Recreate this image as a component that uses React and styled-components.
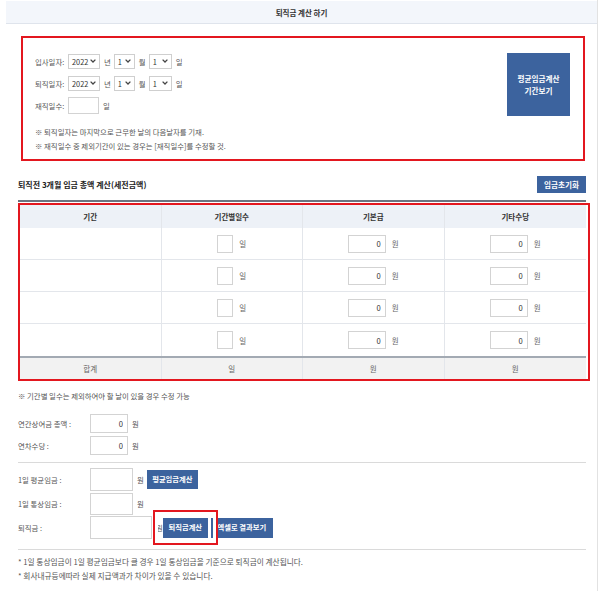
import React from 'react'
import styled, { createGlobalStyle } from 'styled-components'

const GlobalStyle = createGlobalStyle`
  body {
    margin: 0;
    background: #fff;
    font-family: "Noto Sans CJK KR", "Noto Sans", sans-serif;
    color: #444;
  }
  * { box-sizing: border-box; }
`

const Page = styled.div`
  width: 598px;
  min-height: 591px;
  padding-top: 1px;
  border-right: 1px solid #e2e2e2;
`

const Header = styled.div`
  margin-left: 6px;
  height: 23px;
  display: flex;
  align-items: center;
  justify-content: center;
  background: #f3f6fb;
  border-bottom: 1px solid #dfe4ec;
  font-size: 7.5px;
  font-weight: 700;
  color: #333;
`

const Body = styled.div`
  padding: 0 11px 0 18px;
`

const InfoFrame = styled.div`
  margin: 12px 0 0 3px;
  width: 564px;
  height: 125px;
  border: 2px solid #e3171f;
  display: flex;
  justify-content: space-between;
  align-items: flex-start;
  padding: 12px 13px 0 12px;
`

const FormCol = styled.div`
  display: flex;
  flex-direction: column;
`

const DateRow = styled.div`
  display: flex;
  align-items: center;
  height: 22px;
  font-size: 7.4px;
  color: #555;
`

const Label = styled.span`
  width: ${p => p.$w || 33}px;
  flex-shrink: 0;
`

const SelectBox = styled.div`
  width: ${p => p.$w}px;
  height: 15px;
  display: flex;
  align-items: center;
  justify-content: space-between;
  padding: 0 3px 0 3px;
  border: 1px solid #cfcfcf;
  background: #fff;
  color: #333;
  font-size: 7.4px;
`

const Unit = styled.span`
  margin: 0 3px 0 4px;
  color: #555;
`

const TextBox = styled.input`
  width: ${p => p.$w}px;
  height: ${p => p.$h || 18}px;
  border: 1px solid #d3d3d3;
  padding: 0 4px;
  font: inherit;
  font-size: 7.6px;
  color: #333;
  text-align: right;
  background: #fff;
  outline: none;
`

const Notes = styled.div`
  margin-top: ${p => p.$top || 0}px;
  font-size: ${p => p.$size || 7.4}px;
  line-height: 14px;
  color: #555;
`

const BlueButton = styled.button`
  border: none;
  background: #3c639e;
  color: #fff;
  font: inherit;
  font-size: ${p => p.$size || 7.3}px;
  font-weight: 700;
  width: ${p => p.$w}px;
  height: ${p => p.$h}px;
  padding: 0;
  line-height: 1.5;
  margin-top: ${p => p.$top || 0}px;
  margin-left: ${p => p.$left || 0}px;
  flex-shrink: 0;
  white-space: nowrap;
`

const SectionHead = styled.div`
  margin-top: 15px;
  height: 17px;
  display: flex;
  align-items: center;
  justify-content: space-between;
`

const SectionTitle = styled.h3`
  margin: 0;
  font-size: 8px;
  font-weight: 700;
  color: #222;
`

const TableRule = styled.div`
  margin-top: 7px;
  border-top: 2px solid #6b7480;
`

const TableFrame = styled.div`
  margin-top: 1px;
  width: 572px;
  border: 2px solid #e3171f;
  padding-right: 2px;
`

const Row = styled.div`
  display: grid;
  grid-template-columns: repeat(4, 1fr);
  height: ${p => p.$h}px;
  background: ${p => p.$bg || '#fff'};
  border-bottom: ${p => p.$line || '1px solid #e3e6eb'};
  border-top: ${p => p.$topLine || 'none'};
  font-size: 7.5px;
  color: ${p => p.$color || '#555'};
  font-weight: ${p => p.$bold ? 700 : 400};
`

const Cell = styled.div`
  display: flex;
  align-items: center;
  justify-content: center;
  border-right: 1px solid #e3e6eb;
  &:last-child { border-right: none; }
`

const CellUnit = styled.span`
  margin-left: 6px;
  color: #666;
`

const FieldList = styled.div`
  margin-top: ${p => p.$top}px;
  display: flex;
  flex-direction: column;
  gap: ${p => p.$gap}px;
`

const FieldRow = styled.div`
  position: relative;
  display: flex;
  align-items: center;
  height: ${p => p.$h}px;
  font-size: 7.4px;
  color: #555;
`

const Divider = styled.hr`
  margin: ${p => p.$top}px 0 0;
  border: none;
  border-top: 1px solid #dadada;
`

const Highlight = styled.div`
  position: absolute;
  left: 135px;
  top: -6px;
  width: 65px;
  height: 35px;
  border: 2px solid #e3171f;
  box-shadow: inset 0 0 0 3px #fff;
  pointer-events: none;
`

const Chevron = () => (
  <svg width="6" height="4" viewBox="0 0 6 4">
    <path d="M0.6 0.6 L3 3 L5.4 0.6" fill="none" stroke="#444" strokeWidth="1.3" />
  </svg>
)

const Select = ({ w, value }) => (
  <SelectBox $w={w}>
    <span>{value}</span>
    <Chevron />
  </SelectBox>
)

const DatePicker = ({ label }) => (
  <DateRow>
    <Label>{label}</Label>
    <Select w={32} value="2022" />
    <Unit>년</Unit>
    <Select w={21} value="1" />
    <Unit>월</Unit>
    <Select w={23} value="1" />
    <Unit>일</Unit>
  </DateRow>
)

const periods = [1, 2, 3, 4]

const App = () => {
  return (
    <Page>
      <GlobalStyle />
      <Header>퇴직금 계산 하기</Header>
      <Body>
        <InfoFrame>
          <FormCol>
            <DatePicker label="입사일자:" />
            <DatePicker label="퇴직일자:" />
            <DateRow>
              <Label>재직일수:</Label>
              <TextBox $w={31} $h={17} />
              <Unit>일</Unit>
            </DateRow>
            <Notes $top={9}>
              <div>※ 퇴직일자는 마지막으로 근무한 날의 다음날자를 기재.</div>
              <div>※ 재직일수 중 제외기간이 있는 경우는 [재직일수]를 수정할 것.</div>
            </Notes>
          </FormCol>
          <BlueButton $w={63} $h={63} $top={3} $size={7.6}>
            평균임금계산<br />기간보기
          </BlueButton>
        </InfoFrame>

        <SectionHead>
          <SectionTitle>퇴직전 3개월 임금 총액 계산(세전금액)</SectionTitle>
          <BlueButton $w={49} $h={17} $size={7.6}>임금초기화</BlueButton>
        </SectionHead>

        <TableRule />
        <TableFrame>
          <Row $h={23} $bg="#edf1f7" $color="#333" $bold $line="none">
            <Cell>기간</Cell>
            <Cell>기간별일수</Cell>
            <Cell>기본급</Cell>
            <Cell>기타수당</Cell>
          </Row>
          {periods.map(i => (
            <Row key={i} $h={32} $line={i === 4 ? 'none' : undefined}>
              <Cell />
              <Cell>
                <TextBox $w={16} />
                <CellUnit>일</CellUnit>
              </Cell>
              <Cell>
                <TextBox $w={38} defaultValue="0" />
                <CellUnit>원</CellUnit>
              </Cell>
              <Cell>
                <TextBox $w={38} defaultValue="0" />
                <CellUnit>원</CellUnit>
              </Cell>
            </Row>
          ))}
          <Row $h={23} $bg="#f2f2f2" $color="#666" $topLine="2px solid #a3aab3" $line="none">
            <Cell>합계</Cell>
            <Cell>일</Cell>
            <Cell>원</Cell>
            <Cell>원</Cell>
          </Row>
        </TableFrame>

        <Notes $top={8}>※ 기간별 일수는 제외하여야 할 날이 있을 경우 수정 가능</Notes>

        <FieldList $top={10} $gap={2}>
          <FieldRow $h={20}>
            <Label $w={72}>연간상여금 총액 :</Label>
            <TextBox $w={38} $h={19} defaultValue="0" />
            <Unit>원</Unit>
          </FieldRow>
          <FieldRow $h={20}>
            <Label $w={72}>연차수당 :</Label>
            <TextBox $w={38} $h={19} defaultValue="0" />
            <Unit>원</Unit>
          </FieldRow>
        </FieldList>

        <Divider $top={7} />

        <FieldList $top={5} $gap={1}>
          <FieldRow $h={23}>
            <Label $w={72}>1일 평균임금 :</Label>
            <TextBox $w={43} $h={23} />
            <Unit>원</Unit>
            <BlueButton $w={51} $h={19}>평균임금계산</BlueButton>
          </FieldRow>
          <FieldRow $h={23}>
            <Label $w={72}>1일 통상임금 :</Label>
            <TextBox $w={43} $h={22} />
            <Unit>원</Unit>
          </FieldRow>
          <FieldRow $h={23}>
            <Label $w={72}>퇴직금 :</Label>
            <TextBox $w={62} $h={23} />
            <Unit>원</Unit>
            <BlueButton $w={45} $h={20} $left={-3}>퇴직금계산</BlueButton>
            <BlueButton $w={62} $h={20} $left={3}>엑셀로 결과보기</BlueButton>
            <Highlight />
          </FieldRow>
        </FieldList>

        <Divider $top={10} />

        <Notes $top={5} $size={7.7}>
          <div>* 1일 통상임금이 1일 평균임금보다 클 경우 1일 통상임금을 기준으로 퇴직금이 계산됩니다.</div>
          <div>* 회사내규등에따라 실제 지급액과가 차이가 있을 수 있습니다.</div>
        </Notes>
      </Body>
    </Page>
  )
}

export default App
